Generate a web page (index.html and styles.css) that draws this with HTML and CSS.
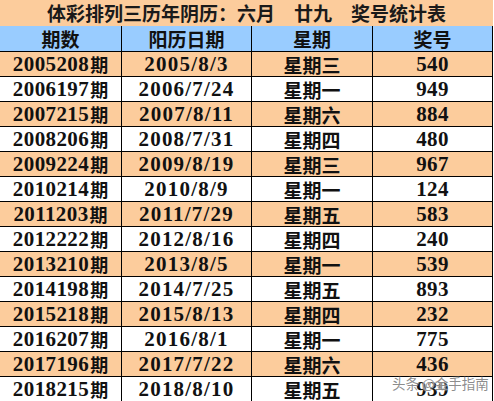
FILE: index.html
```html
<!DOCTYPE html>
<html lang="zh">
<head>
<meta charset="utf-8">
<link rel="stylesheet" href="styles.css">
</head>
<body>
<div class="sheet">
  <div class="title">体彩排列三历年阴历：六月　廿九　奖号统计表</div>
  <div class="row head">
    <div class="cell">期数</div><div class="cell">阳历日期</div><div class="cell">星期</div><div class="cell">奖号</div>
  </div>
  <div class="row alt"><div class="cell">2005208<span class="cj">期</span></div><div class="cell dt">2005/8/3</div><div class="cell wk">星期三</div><div class="cell">540</div></div>
  <div class="row"><div class="cell">2006197<span class="cj">期</span></div><div class="cell dt">2006/7/24</div><div class="cell wk">星期一</div><div class="cell">949</div></div>
  <div class="row alt"><div class="cell">2007215<span class="cj">期</span></div><div class="cell dt">2007/8/11</div><div class="cell wk">星期六</div><div class="cell">884</div></div>
  <div class="row"><div class="cell">2008206<span class="cj">期</span></div><div class="cell dt">2008/7/31</div><div class="cell wk">星期四</div><div class="cell">480</div></div>
  <div class="row alt"><div class="cell">2009224<span class="cj">期</span></div><div class="cell dt">2009/8/19</div><div class="cell wk">星期三</div><div class="cell">967</div></div>
  <div class="row"><div class="cell">2010214<span class="cj">期</span></div><div class="cell dt">2010/8/9</div><div class="cell wk">星期一</div><div class="cell">124</div></div>
  <div class="row alt"><div class="cell">2011203<span class="cj">期</span></div><div class="cell dt">2011/7/29</div><div class="cell wk">星期五</div><div class="cell">583</div></div>
  <div class="row"><div class="cell">2012222<span class="cj">期</span></div><div class="cell dt">2012/8/16</div><div class="cell wk">星期四</div><div class="cell">240</div></div>
  <div class="row alt"><div class="cell">2013210<span class="cj">期</span></div><div class="cell dt">2013/8/5</div><div class="cell wk">星期一</div><div class="cell">539</div></div>
  <div class="row"><div class="cell">2014198<span class="cj">期</span></div><div class="cell dt">2014/7/25</div><div class="cell wk">星期五</div><div class="cell">893</div></div>
  <div class="row alt"><div class="cell">2015218<span class="cj">期</span></div><div class="cell dt">2015/8/13</div><div class="cell wk">星期四</div><div class="cell">232</div></div>
  <div class="row"><div class="cell">2016207<span class="cj">期</span></div><div class="cell dt">2016/8/1</div><div class="cell wk">星期一</div><div class="cell">775</div></div>
  <div class="row alt"><div class="cell">2017196<span class="cj">期</span></div><div class="cell dt">2017/7/22</div><div class="cell wk">星期六</div><div class="cell">436</div></div>
  <div class="row"><div class="cell">2018215<span class="cj">期</span></div><div class="cell dt">2018/8/10</div><div class="cell wk">星期五</div><div class="cell">939</div></div>
  <div class="watermark">头条 @金手指南</div>
</div>
</body>
</html>
```
FILE: styles.css
```css
html, body {
  margin: 0;
  padding: 0;
  background: #ffffff;
}
.sheet {
  position: relative;
  width: 494px;
  height: 401px;
  overflow: hidden;
  font-family: "Liberation Serif", "Noto Sans CJK SC", serif;
  color: #111111;
  font-weight: bold;
}
.title {
  height: 26px;
  width: 493px;
  background: #fccc9c;
  font-family: "Noto Sans CJK SC", sans-serif;
  font-size: 19px;
  line-height: 26px;
  text-align: center;
  color: #1a1a1a;
  white-space: nowrap;
}
.row {
  display: grid;
  grid-template-columns: 122px 130px 121px 120px;
  width: 493px;
  height: 25px;
  background: #ffffff;
}
.row.alt {
  background: #fccc9c;
}
.row.head {
  height: 26px;
  background: #99ccff;
}
.cell {
  border-right: 1px solid #000000;
  border-bottom: 1px solid #000000;
  display: flex;
  align-items: center;
  justify-content: center;
  font-size: 21px;
  line-height: 1;
  letter-spacing: 0.4px;
  white-space: nowrap;
  overflow: hidden;
}
.dt {
  letter-spacing: 1.2px;
}
.cj {
  font-family: "Noto Sans CJK SC", sans-serif;
  font-size: 18px;
  letter-spacing: 0;
  margin-left: 1px;
}
.wk, .head .cell {
  font-family: "Noto Sans CJK SC", sans-serif;
  font-size: 19px;
  letter-spacing: 0;
}
.watermark {
  position: absolute;
  left: 392px;
  top: 374px;
  font-family: "Noto Sans CJK SC", sans-serif;
  font-weight: normal;
  font-size: 13.5px;
  line-height: 18px;
  color: rgba(110, 110, 110, 0.8);
  text-shadow: 0 0 2px #ffffff, 0 0 1px #ffffff;
  white-space: nowrap;
}
```
